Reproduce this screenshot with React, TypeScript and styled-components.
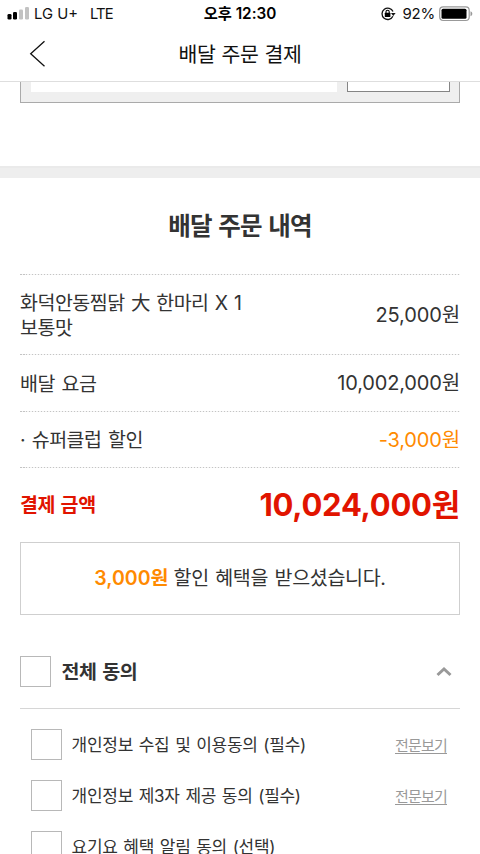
import React from 'react';
import styled, { createGlobalStyle } from 'styled-components';

const GlobalStyle = createGlobalStyle`
  *, *::before, *::after { box-sizing: border-box; }
  html, body { margin: 0; background: #fff; overflow: hidden; }
  body { font-family: Inter, "Noto Sans CJK KR", sans-serif; color: #333; }
`;

const Screen = styled.div`
  width: 480px;
  height: 854px;
  overflow: hidden;
  background: #fff;
  display: flex;
  flex-direction: column;
  > * { flex-shrink: 0; }
`;

const Label = styled.span<{
  $size: number;
  $spacing?: number;
  $word?: number;
  $weight?: number;
  $color?: string;
  $line?: number;
  $drop?: number;
}>`
  display: block;
  white-space: nowrap;
  font-size: ${p => p.$size}px;
  letter-spacing: ${p => p.$spacing ?? 0}px;
  word-spacing: ${p => p.$word ?? 0}px;
  font-weight: ${p => p.$weight ?? 400};
  color: ${p => p.$color ?? '#333'};
  line-height: ${p => p.$line ?? 25}px;
  margin-top: ${p => p.$drop ?? 0}px;
`;

const StatusBar = styled.div`
  height: 27px;
  display: grid;
  grid-template-columns: 1fr auto 1fr;
  align-items: center;
  padding: 0 7px;
`;

const StatusGroup = styled.div<{ $end?: boolean }>`
  display: flex;
  align-items: center;
  justify-content: ${p => (p.$end ? 'flex-end' : 'flex-start')};
`;

const Signal = styled.svg`
  width: 22px;
  height: 14px;
  margin-right: 5px;
`;

const LockIcon = styled.svg`
  width: 16px;
  height: 16px;
  margin-right: 6px;
`;

const Battery = styled.svg`
  width: 35px;
  height: 16px;
  margin-left: 4px;
  margin-right: -1px;
`;

const Gap = styled.span`
  width: 12px;
`;

const NavBar = styled.header`
  height: 55px;
  border-bottom: 1px solid #dedede;
  display: grid;
  grid-template-columns: 60px 1fr 60px;
  align-items: center;
  justify-items: center;
`;

const BackButton = styled.button`
  width: 24px;
  height: 30px;
  padding: 0;
  border: 0;
  background: none;
  margin-left: 10px;
`;

const PanelBottom = styled.div`
  height: 21px;
  margin: 0 20px;
  padding: 0 9px 0 10px;
  border: 1px solid #aaa;
  border-top: 0;
  background: #efefef;
  display: flex;
  justify-content: space-between;
`;

const FieldBottom = styled.div`
  width: 306px;
  height: 10px;
  background: #fff;
`;

const ButtonBottom = styled.div`
  width: 103px;
  height: 10px;
  background: #fff;
  border: 1px solid #858585;
  border-top: 0;
`;

const Divider = styled.div`
  height: 12px;
  margin-top: 63px;
  background: #eee;
  border-top: 2px solid #eaeaea;
`;

const Content = styled.main`
  padding: 0 20px;
  display: flex;
  flex-direction: column;
`;

const SectionTitle = styled.h2`
  height: 96px;
  margin: 0;
  display: flex;
  align-items: center;
  justify-content: center;
`;

const Row = styled.div<{ $height: number }>`
  height: ${p => p.$height}px;
  display: flex;
  align-items: center;
  justify-content: space-between;
  background-image: repeating-linear-gradient(90deg, #c4c4c4 0 1.5px, #f4f4f4 1.5px 3px);
  background-size: 100% 1px;
  background-repeat: no-repeat;
`;

const Notice = styled.div`
  height: 73px;
  border: 1px solid #cfcfcf;
  display: flex;
  align-items: center;
  justify-content: center;
  gap: 5px;
`;

const AgreeAll = styled.div`
  height: 75px;
  margin-top: 19px;
  border-bottom: 1px solid #d6d6d6;
  display: flex;
  align-items: center;
  gap: 10.5px;
`;

const Checkbox = styled.span`
  width: 31px;
  height: 31px;
  border: 1px solid #b8b8b8;
  background: #fff;
  flex: none;
`;

const Chevron = styled.svg`
  width: 16px;
  height: 11px;
  margin: 1px 8px 0 auto;
`;

const AgreeList = styled.div`
  padding: 20px 13px 0 10.6px;
  display: flex;
  flex-direction: column;
  gap: 20.2px;
`;

const AgreeItem = styled.div`
  height: 31px;
  display: flex;
  align-items: center;
  gap: 10px;
`;

const ViewLink = styled.a`
  margin: 1px 0 0 auto;
  font-size: 15px;
  letter-spacing: -0.8px;
  line-height: 17px;
  height: 17px;
  color: #999;
  border-bottom: 1px solid #999;
  white-space: nowrap;
`;

const agreements = [
  { text: '개인정보 수집 및 이용동의 (필수)', link: true },
  { text: '개인정보 제3자 제공 동의 (필수)', link: true },
  { text: '요기요 혜택 알림 동의 (선택)', link: false },
];

export default function App() {
  return (
    <>
      <GlobalStyle />
      <Screen>
        <StatusBar>
          <StatusGroup>
            <Signal viewBox="0 0 22 14">
              <rect x="0.5" y="7" width="4" height="5.5" rx="1.3" fill="#000" />
              <rect x="6" y="5" width="4" height="7.5" rx="1.3" fill="#000" />
              <rect x="12" y="2.5" width="4" height="10" rx="1.3" fill="#c2c2c2" />
              <rect x="18" y="0" width="4" height="12.5" rx="1.3" fill="#c2c2c2" />
            </Signal>
            <Label $size={14.8} $color="#111" $drop={1}>LG U+</Label>
            <Gap />
            <Label $size={14.8} $spacing={-0.8} $color="#111" $drop={1}>LTE</Label>
          </StatusGroup>
          <Label $size={15.3} $weight={600} $color="#000">오후 12:30</Label>
          <StatusGroup $end>
            <LockIcon viewBox="0 0 16 16">
              <path d="M12.9 10.2A5.7 5.7 0 1 1 13 5.6" fill="none" stroke="#111" strokeWidth="1.3" />
              <path d="M11 7h4.6l-2.3 3z" fill="#111" />
              <rect x="4.8" y="6.8" width="5.6" height="4.3" rx="0.5" fill="#000" />
              <path d="M6 7V5.8a1.6 1.6 0 0 1 3.2 0V7" fill="none" stroke="#000" strokeWidth="1.1" />
            </LockIcon>
            <Label $size={15} $spacing={-0.2} $color="#111">92%</Label>
            <Battery viewBox="0 0 35 16">
              <rect x="0.7" y="0.9" width="29.5" height="13.6" rx="3.5" fill="none" stroke="#999" strokeWidth="1.2" />
              <rect x="2.5" y="2.7" width="25" height="10" rx="1.5" fill="#000" />
              <path d="M31.5 5.2c2.4.7 2.4 4.3 0 5z" fill="#999" />
            </Battery>
          </StatusGroup>
        </StatusBar>
        <NavBar>
          <BackButton aria-label="뒤로">
            <svg width="24" height="30" viewBox="0 0 24 30">
              <path d="M21.5 2.2L7.7 14.7l13.8 12.5" fill="none" stroke="#111" strokeWidth="1.3" />
            </svg>
          </BackButton>
          <Label $size={20.5} $spacing={-0.4} $word={0.8} $color="#111">배달 주문 결제</Label>
        </NavBar>
        <PanelBottom>
          <FieldBottom />
          <ButtonBottom />
        </PanelBottom>
        <Divider />
        <Content>
          <SectionTitle>
            <Label $size={24.5} $spacing={-0.7} $word={1.2} $weight={700} $line={30}>배달 주문 내역</Label>
          </SectionTitle>
          <Row $height={80}>
            <Label $size={19.5} $spacing={-0.5} $word={1.3} $drop={4}>화덕안동찜닭 大 한마리 X 1<br />보통맛</Label>
            <Label $size={20} $spacing={-0.1} $drop={2}>25,000원</Label>
          </Row>
          <Row $height={57}>
            <Label $size={19.5} $spacing={-0.4} $word={1.3} $drop={3}>배달 요금</Label>
            <Label $size={20} $spacing={-0.15} $drop={2}>10,002,000원</Label>
          </Row>
          <Row $height={56}>
            <Label $size={19.5} $spacing={-0.5} $word={1.6} $drop={2}>· 슈퍼클럽 할인</Label>
            <Label $size={20} $spacing={-0.15} $color="#ff8a00" $drop={2}>-3,000원</Label>
          </Row>
          <Row $height={75}>
            <Label $size={19.5} $spacing={-0.4} $word={1.3} $weight={700} $color="#e11400" $drop={2}>결제 금액</Label>
            <Label $size={31} $spacing={-0.25} $weight={700} $color="#e11400" $line={36} $drop={1}>10,024,000원</Label>
          </Row>
          <Notice>
            <Label $size={19.5} $weight={600} $color="#ff8a00" $drop={-1}>3,000원</Label>
            <Label $size={19.5} $spacing={-0.3} $word={1.2} $drop={-1}>할인 혜택을 받으셨습니다.</Label>
          </Notice>
          <AgreeAll>
            <Checkbox />
            <Label $size={19.5} $spacing={-0.4} $word={1.5} $weight={700} $drop={2}>전체 동의</Label>
            <Chevron viewBox="0 0 16 11">
              <path d="M1.5 9l6.5-6 6.5 6" fill="none" stroke="#999" strokeWidth="3" />
            </Chevron>
          </AgreeAll>
          <AgreeList>
            {agreements.map(item => (
              <AgreeItem key={item.text}>
                <Checkbox />
                <Label $size={17} $spacing={-0.28} $word={1.2} $drop={2}>{item.text}</Label>
                {item.link && <ViewLink>전문보기</ViewLink>}
              </AgreeItem>
            ))}
          </AgreeList>
        </Content>
      </Screen>
    </>
  );
}
